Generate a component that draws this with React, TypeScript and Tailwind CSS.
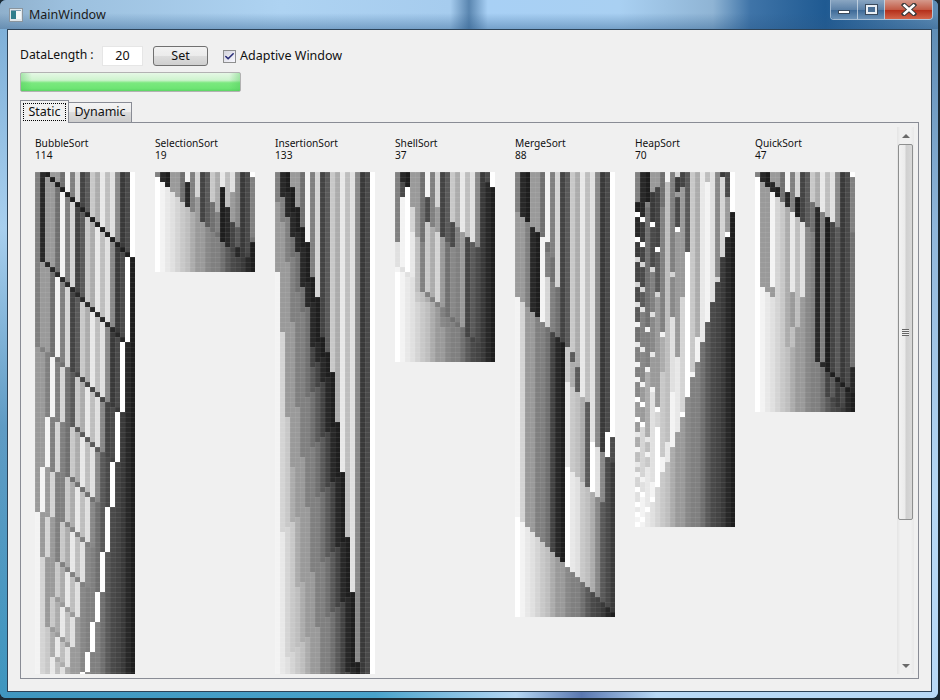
import { useMemo } from "react";
import { Check } from "lucide-react";

const initial = [128, 40, 30, 154, 154, 112, 243, 128, 212, 68, 90, 200, 172, 232, 190, 224, 136, 58, 74, 255];

type Rows = number[][];

// every sort pushes a snapshot per step, lighter values go left
function recorder() {
  const a = [...initial];
  const rows: Rows = [[...a]];
  const push = () => rows.push([...a]);
  const swap = (i: number, j: number) => {
    const t = a[i];
    a[i] = a[j];
    a[j] = t;
    push();
  };
  return { a, rows, push, swap };
}

function bubble() {
  const { a, rows, swap } = recorder();
  for (let i = 0; i < a.length - 1; i++) {
    for (let j = 0; j < a.length - 1 - i; j++) {
      if (a[j] < a[j + 1]) swap(j, j + 1);
    }
  }
  return rows;
}

function selection() {
  const { a, rows, swap } = recorder();
  for (let i = 0; i < a.length - 1; i++) {
    let m = i;
    for (let j = i + 1; j < a.length; j++) {
      if (a[j] > a[m]) m = j;
    }
    swap(i, m);
  }
  return rows;
}

function insertion() {
  const { a, rows, push } = recorder();
  for (let i = 1; i < a.length; i++) {
    const t = a[i];
    let j = i;
    while (j > 0 && a[j - 1] < t) {
      a[j] = a[j - 1];
      push();
      j--;
    }
    a[j] = t;
    push();
  }
  return rows;
}

function shell() {
  const { a, rows, push } = recorder();
  for (const gap of [17, 5, 1]) {
    for (let i = gap; i < a.length; i++) {
      const t = a[i];
      let j = i;
      while (j >= gap && a[j - gap] < t) {
        a[j] = a[j - gap];
        j -= gap;
      }
      a[j] = t;
      push();
    }
  }
  return rows;
}

function merge() {
  const { a, rows, push } = recorder();
  const sort = (lo: number, hi: number) => {
    if (lo >= hi) return;
    const mid = Math.floor((lo + hi) / 2);
    sort(lo, mid);
    sort(mid + 1, hi);
    const tmp = a.slice(lo, hi + 1);
    let i = 0;
    const n = mid - lo + 1;
    let j = n;
    for (let k = lo; k <= hi; k++) {
      if (j >= tmp.length || (i < n && tmp[i] >= tmp[j])) a[k] = tmp[i++];
      else a[k] = tmp[j++];
      push();
    }
  };
  sort(0, a.length - 1);
  return rows;
}

function heap() {
  const { a, rows, swap } = recorder();
  const sift = (start: number, size: number) => {
    let p = start;
    while (p * 2 + 1 < size) {
      let c = p * 2 + 1;
      if (c + 1 < size && a[c + 1] < a[c]) c++;
      if (a[p] <= a[c]) break;
      swap(p, c);
      p = c;
    }
  };
  for (let i = Math.floor(a.length / 2) - 1; i >= 0; i--) sift(i, a.length);
  for (let end = a.length - 1; end > 0; end--) {
    swap(0, end);
    sift(0, end);
  }
  // the run in the screenshot is one step shorter
  rows.splice(40, 1);
  return rows;
}

function quick() {
  const { a, rows, swap } = recorder();
  const sort = (lo: number, hi: number) => {
    if (lo >= hi) return;
    const pivot = a[hi];
    let i = lo - 1;
    for (let j = lo; j < hi; j++) {
      if (a[j] > pivot) {
        i++;
        swap(i, j);
      }
    }
    swap(i + 1, hi);
    sort(lo, i);
    sort(i + 2, hi);
  };
  sort(0, a.length - 1);
  return rows;
}

const sorts = [
  { name: "BubbleSort", run: bubble },
  { name: "SelectionSort", run: selection },
  { name: "InsertionSort", run: insertion },
  { name: "ShellSort", run: shell },
  { name: "MergeSort", run: merge },
  { name: "HeapSort", run: heap },
  { name: "QuickSort", run: quick },
];

function SortChart({ name, run, idx }: { name: string; run: () => Rows; idx: number }) {
  const rows = useMemo(run, [run]);
  const pid = `seam${idx}`;
  return (
    <div className="w-[120px] shrink-0">
      <div className="text-[10.2px] leading-[12px] text-[#111]">{name}</div>
      <div className="text-[10.2px] leading-[12px] text-[#111]">{rows.length - 1}</div>
      <svg width={100} height={rows.length * 5} className="mt-[11px] block" shapeRendering="crispEdges">
        <defs>
          <pattern id={pid} width={5} height={5} patternUnits="userSpaceOnUse">
            <rect width={5} height={1} fill="#fff" fillOpacity={0.07} />
            <rect width={1} height={5} fill="#fff" fillOpacity={0.05} />
          </pattern>
        </defs>
        {rows.map((row, y) =>
          row.map((g, x) => (
            <rect key={x} x={x * 5} y={y * 5} width={5} height={5} fill={`rgb(${g},${g},${g})`} />
          ))
        )}
        <rect width={100} height={rows.length * 5} fill={`url(#${pid})`} />
      </svg>
    </div>
  );
}

function CaptionButtons() {
  return (
    <div className="flex h-[20px] mr-[5px] rounded-b-[4px] border border-t-0 border-[#dfe8f0aa] overflow-hidden">
      <div className="w-[27px] flex items-center justify-center border-r border-[#dfe8f0aa] bg-[linear-gradient(#8aa6c2,#5d82a8_50%,#3f6b98_55%,#6c93b8)]">
        <div className="w-[12px] h-[4px] mt-[4px] bg-white border border-[#3a4a5c]" />
      </div>
      <div className="w-[27px] flex items-center justify-center border-r border-[#dfe8f0aa] bg-[linear-gradient(#8aa6c2,#5d82a8_50%,#3f6b98_55%,#6c93b8)]">
        <div className="w-[11px] h-[9px] bg-[#4a6f95] border-2 border-[#e8eef4] outline outline-[#3a4a5c]" />
      </div>
      <div className="w-[47px] flex items-center justify-center bg-[linear-gradient(#d59a8c,#c25c47_50%,#b5301b_55%,#d2654a)]">
        <svg width={16} height={13} viewBox="0 0 16 13">
          <path d="M3 2 L13 11 M13 2 L3 11" stroke="#3a3a3a" strokeWidth={4.5} strokeLinecap="square" />
          <path d="M3.5 2.5 L12.5 10.5 M12.5 2.5 L3.5 10.5" stroke="#fff" strokeWidth={2.6} strokeLinecap="square" />
        </svg>
      </div>
    </div>
  );
}

function WindowIcon() {
  return (
    <svg width={14} height={14} viewBox="0 0 14 14" className="shrink-0" shapeRendering="crispEdges">
      <rect x={0.5} y={0.5} width={13} height={13} fill="#dfe6ea" stroke="#8a959e" />
      <rect x={2} y={3} width={5} height={8} fill="#2f7d8c" />
      <rect x={7} y={3} width={5} height={8} fill="#f4f7f8" />
      <rect x={2} y={2} width={10} height={1} fill="#7fa0b4" />
    </svg>
  );
}

function ScrollBar() {
  return (
    <div className="w-[17px] shrink-0 flex flex-col items-center bg-[linear-gradient(90deg,#e4e4e4,#f0f0f0_20%,#f0f0f0_80%,#e8e8e8)]">
      <div className="h-[17px] flex items-center justify-center">
        <div className="w-0 h-0 border-x-[4px] border-x-transparent border-b-[4px] border-b-[#6a6a6a]" />
      </div>
      <div className="w-[15px] h-[376px] rounded-[2px] border border-[#8e8f8f] flex items-center justify-center bg-[linear-gradient(90deg,#f2f2f2,#ebebeb_45%,#d0d0d0_55%,#d8d8d8)]">
        <div className="w-[7px] h-[7px] bg-[repeating-linear-gradient(#666_0,#666_1px,#eee_1px,#eee_2px)]" />
      </div>
      <div className="flex-1" />
      <div className="h-[17px] flex items-center justify-center">
        <div className="w-0 h-0 border-x-[4px] border-x-transparent border-t-[4px] border-t-[#6a6a6a]" />
      </div>
    </div>
  );
}

export default function App() {
  return (
    <div className="w-[940px] h-[700px] overflow-hidden bg-[#1c2a33] font-['Noto_Sans',sans-serif]">
      <div className="w-[938px] h-[698px] flex flex-col rounded-[6px] overflow-hidden bg-[#5f93c0]">
        <div className="h-[29px] shrink-0 flex justify-between bg-[linear-gradient(transparent_45%,#2a5a8a66),linear-gradient(90deg,#8fb0cc,#9cc0de_7%,#aed3f2_30%,#a6ccee_48%,#5a86b0_50%,#a8d0f5_52%,#a9d0f2_66%,#8fb4d4_76%,#3f74a8_80%,#1f5a92_88%,#5f8db5)]">
          <div className="flex items-center pl-[9px] pt-[1px] gap-[6px] text-[12.5px] text-[#1a1a1a]">
            <WindowIcon />
            <span>MainWindow</span>
          </div>
          <CaptionButtons />
        </div>
        <div className="flex-1 flex min-h-0">
          <div className="w-[7px] shrink-0 bg-[linear-gradient(#7fb0d8,#a8cfee_30%,#5f9bc4_60%,#3f96bf)]" />
          <div className="flex-1 min-w-0 flex flex-col border border-[#2d4358] bg-[#f0f0f0] pl-[12px] pr-[12px] pt-[16px] pb-[12px]">
            <div className="flex items-center h-[20px] text-[12.5px] text-[#111]">
              <span className="w-[82px] -mt-[2px] text-[12.2px]">DataLength :</span>
              <div className="w-[41px] h-[20px] bg-white border border-[#e6e6e6] flex items-center justify-center">20</div>
              <div className="ml-[10px] w-[55px] h-[20px] rounded-[3px] border border-[#707070] flex items-center justify-center bg-[linear-gradient(#f2f2f2,#ebebeb_50%,#dddddd_50%,#cfcfcf)]">
                Set
              </div>
              <div className="ml-[15px] w-[13px] h-[13px] border border-[#8e8f8f] bg-[linear-gradient(135deg,#d4d4dc,#f8f8ff)] flex items-center justify-center">
                <Check size={11} strokeWidth={3.5} className="text-[#2b2f78]" />
              </div>
              <span className="ml-[4px]">Adaptive Window</span>
            </div>
            <div className="mt-[6px] w-[221px] h-[20px] shrink-0 rounded-[2px] border border-[#b2b2b2] bg-[linear-gradient(#e6f8e6,#cdf3cd_40%,#7be87f_55%,#6ee574_85%,#5ed566)] relative">
              <div className="absolute inset-0 bg-[linear-gradient(90deg,#4fc95a66,transparent_5%,transparent_95%,#4fc95a66)]" />
            </div>
            <div className="mt-[8px] h-[22px] shrink-0 flex items-end text-[12.5px] text-[#111]">
              <div className="w-[49px] h-[23px] -mb-[1px] z-10 border border-b-0 border-[#898c95] bg-[#f0f0f0] p-[2px]">
                <div className="h-full border border-dotted border-black flex items-center justify-center">Static</div>
              </div>
              <div className="w-[63px] h-[20px] border border-b-0 border-l-0 border-[#898c95] bg-[linear-gradient(#f4f4f4,#ebebeb_50%,#dcdcdc_50%,#cdcdcd)] flex items-center justify-center">
                Dynamic
              </div>
            </div>
            <div className="flex-1 min-h-0 border border-[#898c95] p-[4px] flex">
              <div className="flex-1 min-w-0 overflow-hidden flex pl-[10px] pt-[10px]">
                {sorts.map((s, i) => (
                  <SortChart key={s.name} name={s.name} run={s.run} idx={i} />
                ))}
              </div>
              <ScrollBar />
            </div>
          </div>
          <div className="w-[6px] shrink-0 bg-[linear-gradient(#5f8db5,#8fb6da_30%,#b5d7f4_70%,#b8d9f6)]" />
        </div>
        <div className="h-[6px] shrink-0 bg-[linear-gradient(90deg,#3f96bf,#49a3cb_40%,#b5d7f4_55%,#5a78b0_62%,#b8d9f6_70%,#b8d9f6)]" />
      </div>
    </div>
  );
}
